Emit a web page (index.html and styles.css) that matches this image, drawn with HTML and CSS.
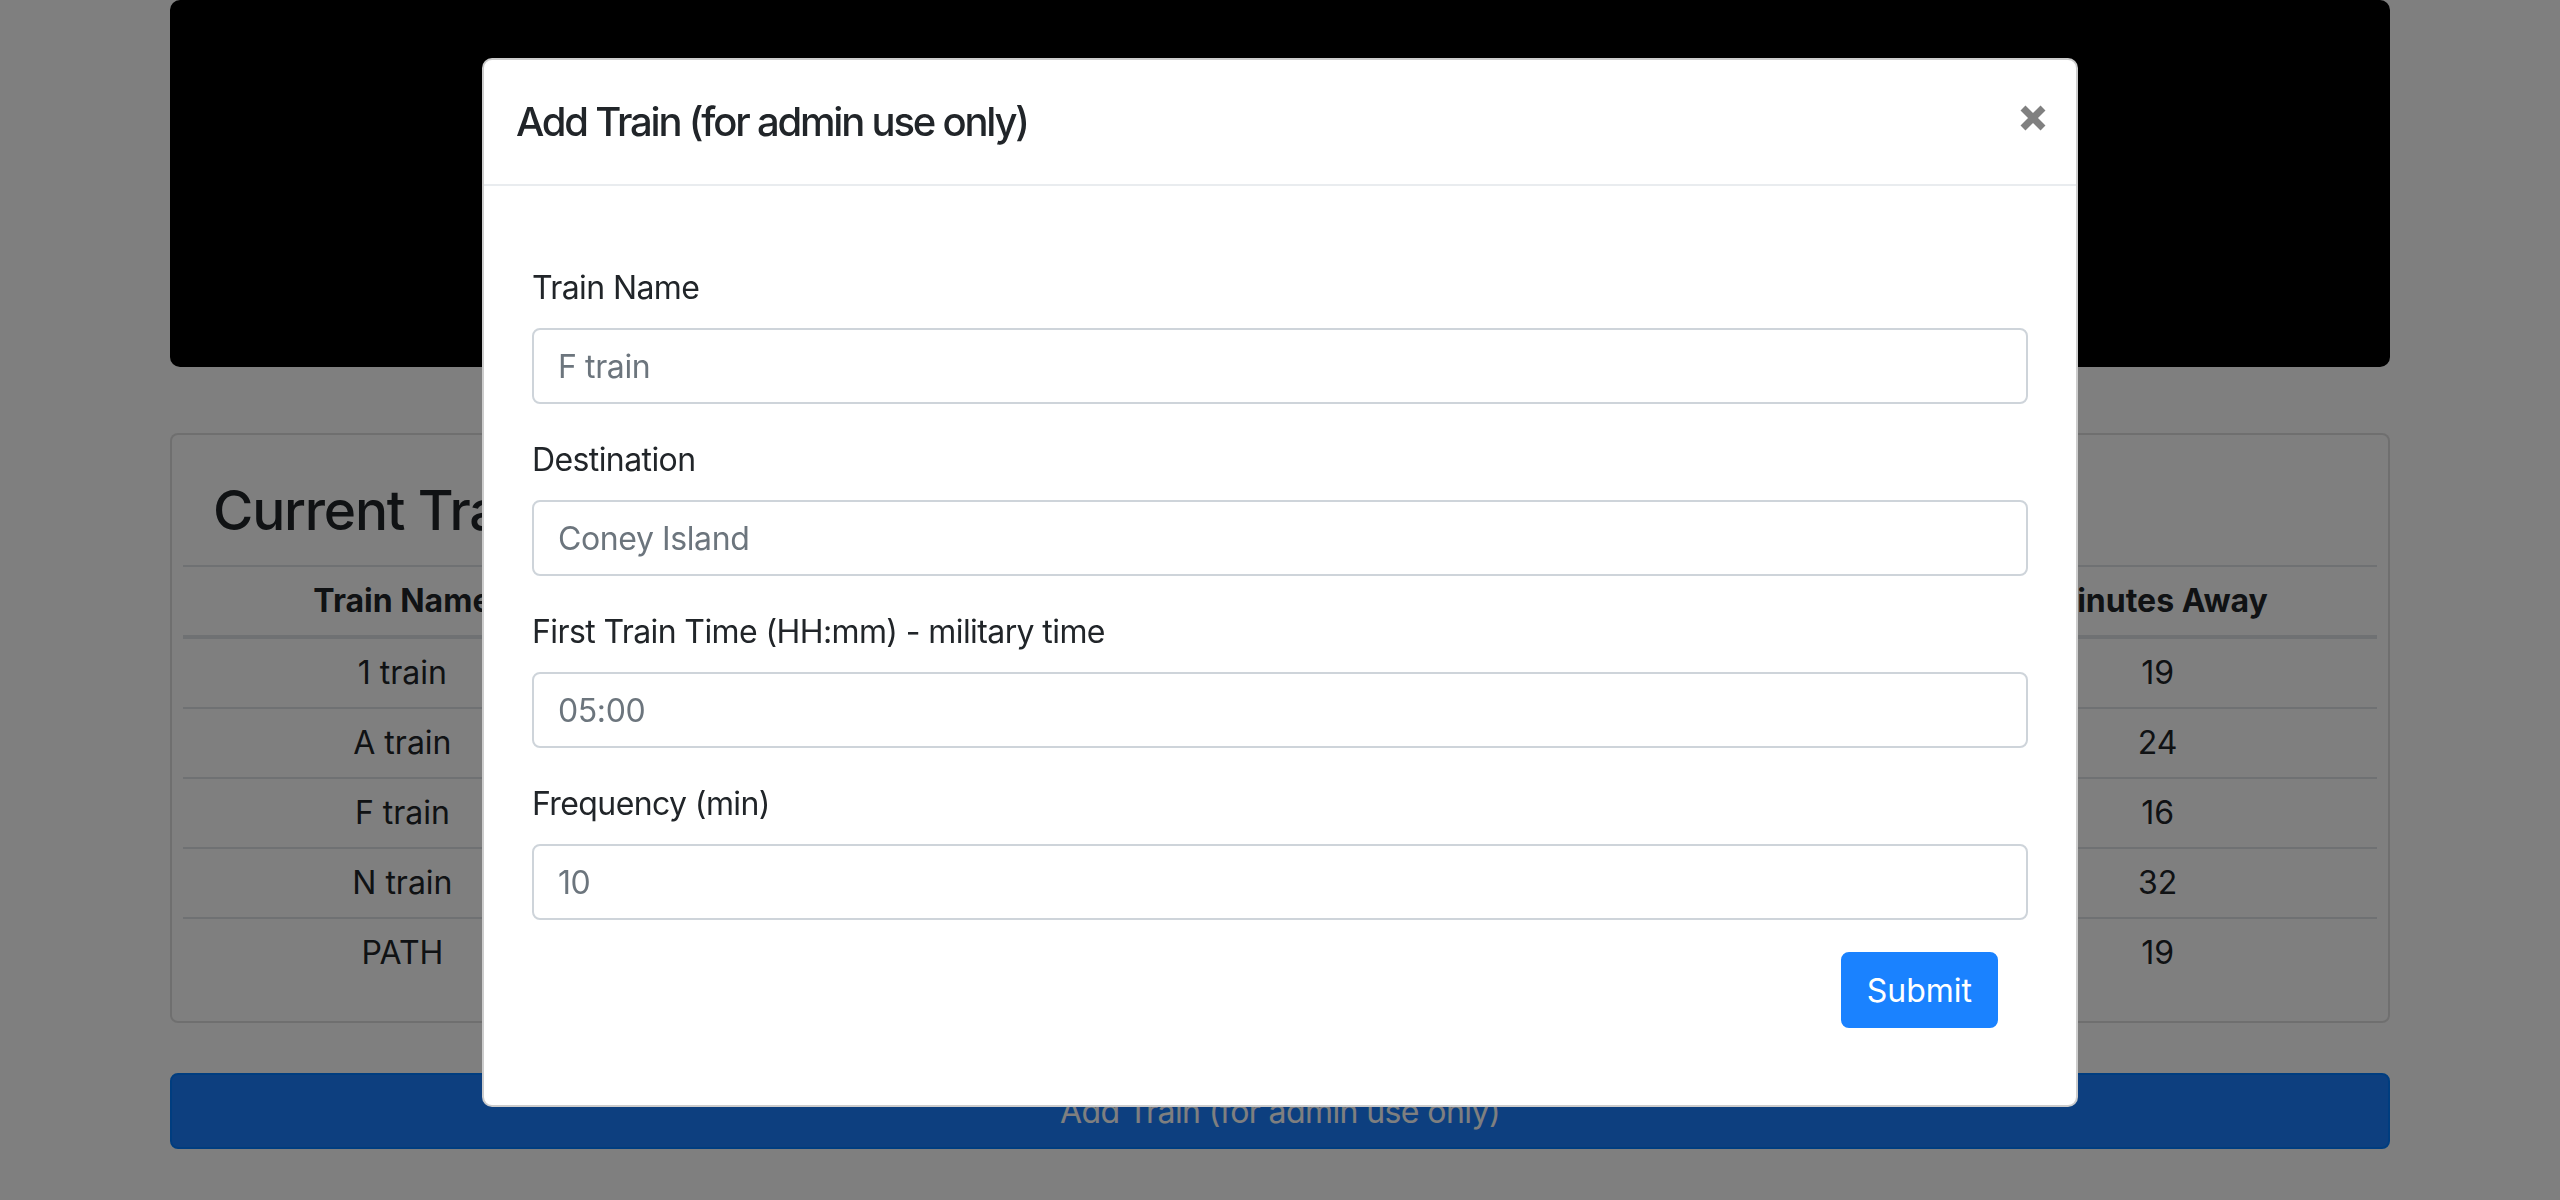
FILE: index.html
```html
<!DOCTYPE html>
<html lang="en">
<head>
<meta charset="utf-8">
<title>Train Scheduler</title>
<link rel="stylesheet" href="styles.css">
</head>
<body>
<div class="container">
  <header class="jumbotron">
    <h1 class="jumbo-title">Train Scheduler</h1>
  </header>

  <section class="card">
    <div class="card-body">
      <h3 class="card-title">Current Trains</h3>
      <table class="table">
        <thead>
          <tr><th>Train Name</th><th>Destination</th><th>Frequency (min)</th><th>Next Arrival</th><th>Minutes Away</th></tr>
        </thead>
        <tbody>
          <tr><td>1 train</td><td>Van Cortlandt Park</td><td>20</td><td>04:12 PM</td><td>19</td></tr>
          <tr><td>A train</td><td>Far Rockaway</td><td>30</td><td>04:17 PM</td><td>24</td></tr>
          <tr><td>F train</td><td>Coney Island</td><td>10</td><td>04:09 PM</td><td>16</td></tr>
          <tr><td>N train</td><td>Astoria</td><td>45</td><td>04:25 PM</td><td>32</td></tr>
          <tr><td>PATH</td><td>Hoboken</td><td>25</td><td>04:12 PM</td><td>19</td></tr>
        </tbody>
      </table>
    </div>
  </section>

  <button class="btn-add" type="button">Add Train (for admin use only)</button>
</div>

<div class="backdrop"></div>

<div class="modal">
  <div class="modal-content">
    <div class="modal-header">
      <h5 class="modal-title">Add Train (for admin use only)</h5>
      <button class="close" type="button" aria-label="Close">
        <svg width="26" height="26" viewBox="0 0 26 26"><path d="M3 3 L23 23 M23 3 L3 23" stroke="#808080" stroke-width="7"/></svg>
      </button>
    </div>
    <form class="modal-body">
      <div class="form-group">
        <label class="label">Train Name</label>
        <input class="input" type="text" placeholder="F train">
      </div>
      <div class="form-group">
        <label class="label">Destination</label>
        <input class="input" type="text" placeholder="Coney Island">
      </div>
      <div class="form-group">
        <label class="label">First Train Time (HH:mm) - military time</label>
        <input class="input" type="text" placeholder="05:00">
      </div>
      <div class="form-group">
        <label class="label">Frequency (min)</label>
        <input class="input" type="text" placeholder="10">
      </div>
      <div class="actions">
        <button class="btn-submit" type="submit">Submit</button>
      </div>
    </form>
  </div>
</div>
</body>
</html>
```

FILE: styles.css
```css
* { box-sizing: border-box; }

html, body {
  margin: 0;
  padding: 0;
  background: #ffffff;
  font-family: Inter, "Liberation Sans", sans-serif;
  color: #212529;
  overflow: hidden;
}

.container {
  width: 2280px;
  margin: 0 auto;
  padding: 0 30px;
}

.jumbotron {
  height: 367px;
  background: #000000;
  border-radius: 10px;
  margin-bottom: 66px;
  display: flex;
  align-items: center;
  justify-content: center;
}

.jumbo-title {
  margin: 0;
  color: #ffffff;
  font-size: 96px;
  font-weight: 300;
}

.card {
  border: 2px solid rgba(0, 0, 0, 0.125);
  border-radius: 8px;
  background: #ffffff;
}

.card-body {
  padding: 42px 11px 34px 11px;
}

.card-title {
  margin: 0 0 21px 0;
  padding-left: 30px;
  font-size: 55px;
  line-height: 67px;
  font-weight: 500;
  letter-spacing: -1.2px;
}

.table {
  width: 100%;
  border-collapse: collapse;
  table-layout: fixed;
  font-size: 32px;
  line-height: 48px;
}

.table th,
.table td {
  text-align: center;
  padding: 10px;
  border-top: 2px solid #dee2e6;
}

.table th {
  font-weight: 700;
  border-bottom: 4px solid #dee2e6;
}

.btn-add {
  display: block;
  width: 100%;
  height: 76px;
  margin-top: 50px;
  border: 2px solid #007bff;
  border-radius: 8px;
  background: #1a7fff;
  color: #ffffff;
  font-family: inherit;
  font-size: 32px;
  letter-spacing: -0.6px;
}

.backdrop {
  position: fixed;
  inset: 0;
  background: rgba(0, 0, 0, 0.5);
}

.modal {
  position: fixed;
  inset: 0;
}

.modal-content {
  width: 1596px;
  margin: 58px auto 0 auto;
  background: #ffffff;
  border: 2px solid rgba(0, 0, 0, 0.2);
  border-radius: 10px;
}

.modal-header {
  display: flex;
  align-items: flex-start;
  justify-content: space-between;
  padding: 32px;
  border-bottom: 2px solid #e9ecef;
}

.modal-title {
  margin: 0;
  font-size: 40px;
  line-height: 60px;
  font-weight: 500;
  letter-spacing: -2.2px;
}

.close {
  width: 26px;
  height: 26px;
  margin: 13px -2px 0 0;
  padding: 0;
  border: 0;
  background: transparent;
  display: flex;
}

.modal-body {
  padding: 78px 48px 77px 48px;
}

.form-group {
  margin-bottom: 32px;
}

.label {
  display: block;
  font-size: 32px;
  line-height: 48px;
  margin-bottom: 16px;
  letter-spacing: -0.6px;
}

.input {
  display: block;
  width: 100%;
  height: 76px;
  padding: 0 24px;
  border: 2px solid #ced4da;
  border-radius: 8px;
  font-family: inherit;
  font-size: 32px;
  letter-spacing: -0.4px;
  color: #495057;
  background: #ffffff;
}

.input::placeholder {
  color: #6c757d;
  opacity: 1;
}

.actions {
  display: flex;
  justify-content: flex-end;
  padding-right: 30px;
}

.btn-submit {
  height: 76px;
  padding: 0 24px;
  border: 2px solid #1a82ff;
  border-radius: 8px;
  background: #1a82ff;
  color: #ffffff;
  font-family: inherit;
  font-size: 32px;
}
```
